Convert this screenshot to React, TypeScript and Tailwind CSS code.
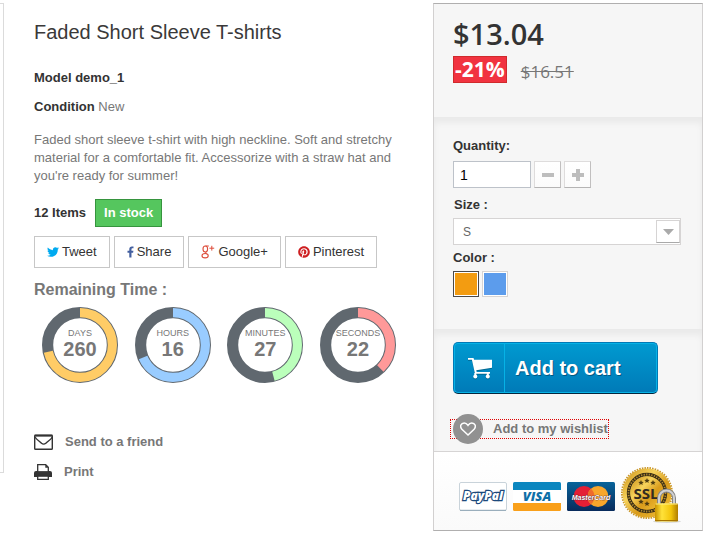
import { useState } from 'react';
import type { ReactNode } from 'react';
import { FaFacebookF, FaPinterest, FaTwitter } from 'react-icons/fa';

interface RingProps {
  label: string;
  value: number;
  percent: number;
  color: string;
}

const rings: RingProps[] = [
  { label: 'DAYS', value: 260, percent: 71.6, color: '#ffcc66' },
  { label: 'HOURS', value: 16, percent: 68.7, color: '#99ccff' },
  { label: 'MINUTES', value: 27, percent: 45.8, color: '#bbffbb' },
  { label: 'SECONDS', value: 22, percent: 37.9, color: '#ff9999' },
];

function Ring({ label, value, percent, color }: RingProps) {
  return (
    <div className="relative size-[76px]">
      <svg viewBox="1 1 76 76" className="size-full">
        <circle cx="39" cy="39" r="32.4" fill="none" stroke="#60686f" strokeWidth="11.2" />
        <circle
          cx="39"
          cy="39"
          r="32.4"
          fill="none"
          stroke={color}
          strokeWidth="9.2"
          pathLength="100"
          strokeDasharray={`${percent} 100`}
          transform="rotate(-90 39 39)"
        />
      </svg>
      <div className="absolute inset-0 flex flex-col items-center pt-[21px]">
        <span className="text-[9px] leading-[11px]">{label}</span>
        <b className="text-xl leading-5">{value}</b>
      </div>
    </div>
  );
}

function GooglePlusIcon() {
  return (
    <svg viewBox="0 0 14 14" className="size-[14px]" fill="none" stroke="#dd4b39">
      <ellipse cx="4.3" cy="4" rx="2.3" ry="3" strokeWidth="1.1" />
      <path d="M4.5 1h3.3M5.8 6.6c-1.7.8-1.5 1.5-.2 2.2" strokeWidth="1" />
      <ellipse cx="4.1" cy="10.7" rx="3.1" ry="2.2" strokeWidth="1.1" />
      <path d="M8.4 3.2h4.8M10.8.8v4.8" strokeWidth="1" />
    </svg>
  );
}

function EnvelopeIcon() {
  return (
    <svg viewBox="0 0 20 16" className="h-4 w-5" fill="none" stroke="#333">
      <rect x=".7" y="1.500" width="17.600" height="13.800" rx=".8" strokeWidth="1.400" />
      <path d="M.5 1.500h18" strokeWidth="2" />
      <path d="M1.200 3.200c.5 2 5 4.500 6.300 6 1.300 1.100 3 1.100 4.300 0 1.300-1.500 5.900-4 6.400-6" strokeWidth="1.400" />
    </svg>
  );
}

function PrinterIcon() {
  return (
    <svg viewBox="0 0 18 16" className="h-4 w-[18px]">
      <path d="M2 7h14q2 0 2 2v4H0V9q0-2 2-2z" fill="#333" />
      <path d="M3.700 8.200V.7h8L14.300 3.300v4.900z" fill="#fff" stroke="#333" strokeWidth="1.3" />
      <path d="M11.300.7v3h3z" fill="#333" />
      <path d="M3 8h12" stroke="#333" strokeWidth="1.5" />
      <path d="M3.700 12.200h10.600v3.100H3.700z" fill="#fff" stroke="#333" strokeWidth="1.3" />
    </svg>
  );
}

function CartIcon() {
  return (
    <svg viewBox="0 0 24 22" className="h-[22px] w-6 drop-shadow-[0_1px_0_#01678f]" fill="#fff">
      <path d="M0 1h5.500l.6 1.800H24v8L8.300 13.300l.4 1.700H22v1.800H7L3.900 2.700H0z" />
      <circle cx="7.300" cy="19.500" r="2" />
      <circle cx="19.800" cy="19.500" r="2" />
      <path d="M6.300 16h2v3h-2zM18.800 16h2v3h-2z" />
    </svg>
  );
}

function PayPalLogo() {
  return (
    <svg viewBox="0 0 48 29" className="h-[29px] w-12">
      <rect x=".5" y=".5" width="47" height="28" rx="1.500" fill="#fff" stroke="#c9d3da" />
      <path d="M1 28.300h46" stroke="#8fa5b4" />
      <text
        x="24"
        y="18"
        textAnchor="middle"
        fontFamily="'Open Sans', sans-serif"
        fontSize="12"
        fontWeight="800"
        fontStyle="italic"
        fill="#fff"
        stroke="#1d4a7c"
        strokeWidth="2.400"
        paintOrder="stroke"
      >
        PayPal
      </text>
    </svg>
  );
}

function VisaLogo() {
  return (
    <svg viewBox="0 0 48 29" className="h-[29px] w-12">
      <rect width="48" height="29" rx="1.500" fill="#fff" />
      <path d="M0 8V1.500Q0 0 1.500 0h45Q48 0 48 1.500V8z" fill="#0b86bf" />
      <path d="M0 21h48v6.500q0 1.500-1.500 1.500h-45Q0 29 0 27.500z" fill="#f9a01b" />
      <text
        x="24"
        y="19"
        textAnchor="middle"
        fontFamily="'Open Sans', sans-serif"
        fontSize="13"
        fontWeight="800"
        fontStyle="italic"
        fill="#0f6fa8"
      >
        VISA
      </text>
    </svg>
  );
}

function MasterCardLogo() {
  return (
    <svg viewBox="0 0 48 29" className="h-[29px] w-12">
      <defs>
        <linearGradient id="mc" x1="0" y1="0" x2="0" y2="1">
          <stop offset="0" stopColor="#07639a" />
          <stop offset="1" stopColor="#082b5c" />
        </linearGradient>
      </defs>
      <rect width="48" height="29" rx="1.500" fill="url(#mc)" />
      <circle cx="17" cy="14.500" r="10.500" fill="#e41f35" />
      <circle cx="31" cy="14.500" r="10.500" fill="#f8a62b" />
      <path d="M24 6.700a10.500 10.500 0 0 1 0 15.600 10.500 10.500 0 0 1 0-15.600" fill="#ee6a2c" />
      <text
        x="24"
        y="17.500"
        textAnchor="middle"
        fontSize="7"
        fontWeight="bold"
        fontStyle="italic"
        fill="#fff"
        stroke="#4a1830"
        strokeWidth=".6"
        paintOrder="stroke"
      >
        MasterCard
      </text>
    </svg>
  );
}

function SslBadge() {
  return (
    <svg viewBox="0 0 60 58" className="h-[58px] w-[60px]">
      <defs>
        <linearGradient id="gold" x1="0" y1="0" x2="1" y2="1">
          <stop offset="0" stopColor="#c98d12" />
          <stop offset=".35" stopColor="#f7d35c" />
          <stop offset=".6" stopColor="#d99b1b" />
          <stop offset="1" stopColor="#f3c43c" />
        </linearGradient>
        <linearGradient id="lock" x1="0" y1="0" x2="1" y2="0">
          <stop offset="0" stopColor="#c99300" />
          <stop offset=".3" stopColor="#ffe23a" />
          <stop offset=".7" stopColor="#f2c40a" />
          <stop offset="1" stopColor="#b07d00" />
        </linearGradient>
      </defs>
      <circle cx="26" cy="26" r="25" fill="none" stroke="#c8962a" strokeWidth="2" strokeDasharray="1.500 1.100" />
      <circle cx="26" cy="26" r="24.500" fill="url(#gold)" />
      <circle cx="26" cy="26" r="18.500" fill="none" stroke="#3b2f16" strokeWidth="3.400" />
      <circle cx="26" cy="26" r="18.500" fill="none" stroke="#b99133" strokeWidth="1.800" strokeDasharray="1.200 1.400" />
      <circle cx="26" cy="26" r="16.500" fill="url(#gold)" />
      <g fill="#4d3b12">
        <path id="star" d="m26 11 .8 1.700 1.900.2-1.400 1.300.4 1.900-1.700-1-1.700 1 .4-1.900-1.400-1.300 1.900-.2z" />
        <use href="#star" x="-6" y="2" />
        <use href="#star" x="6" y="2" />
        <use href="#star" x="-6" y="21" />
        <use href="#star" y="23" />
      </g>
      <text
        x="25"
        y="32"
        textAnchor="middle"
        fontFamily="'Open Sans', sans-serif"
        fontSize="15"
        fontWeight="bold"
        fill="#332b20"
      >
        SSL
      </text>
      <ellipse cx="46" cy="54.500" rx="14" ry="1.500" fill="#d8d8d8" />
      <path d="M38 38v-7a7.500 7.500 0 0 1 15 0v7" fill="none" stroke="#858585" strokeWidth="4" />
      <path d="M38 38v-7a7.500 7.500 0 0 1 15 0v7" fill="none" stroke="#d0d0d0" strokeWidth="2" />
      <rect x="34" y="36.500" width="23" height="18" rx="1" fill="url(#lock)" />
      <path d="M34.500 37h22" stroke="#fff08a" />
      <path d="M34 53.500h23" stroke="#a87500" />
    </svg>
  );
}

function ShareButton({ icon, children }: { icon: ReactNode; children: ReactNode }) {
  return (
    <button
      type="button"
      className="flex h-8 items-center gap-[3px] border border-[#c7c7c7] bg-white px-3 text-[13px] text-[#333]"
    >
      {icon}
      {children}
    </button>
  );
}

export default function App() {
  const [quantity, setQuantity] = useState('1');
  const [color, setColor] = useState('orange');

  const changeQuantity = (delta: number) => {
    setQuantity((q) => String(Math.max(1, (Number(q) || 1) + delta)));
  };

  return (
    <main className="flex items-start bg-white pt-[3px] pr-px font-['Liberation_Sans',Arial,sans-serif] text-[13px] leading-[18px] text-[#777]">
      <div className="h-[470px] w-1 shrink-0 border-y border-r border-[#dbdbdb]" />

      <section className="min-w-0 flex-1 pt-4 pr-8 pl-[30px]">
        <h1 className="text-xl leading-[26px] text-[#3a3939]">Faded Short Sleeve T-shirts</h1>
        <p className="mt-6">
          <b className="text-[#333]">Model demo_1</b>
        </p>
        <p className="mt-[11px]">
          <b className="text-[#333]">Condition</b> New
        </p>
        <p className="mt-[15px]">
          Faded short sleeve t-shirt with high neckline. Soft and stretchy material for a comfortable fit.
          Accessorize with a straw hat and you're ready for summer!
        </p>

        <div className="mt-[14px] flex items-center gap-[9px] font-bold text-[#333]">
          <span>12 Items</span>
          <span className="border border-[#36943e] bg-[#55c65e] px-2 py-1 text-white">In stock</span>
        </div>

        <div className="mt-[9px] flex gap-1">
          <ShareButton icon={<FaTwitter className="size-3 text-[#00aaf0]" />}>Tweet</ShareButton>
          <ShareButton icon={<FaFacebookF className="h-3 w-[7px] text-[#435f9f]" />}>Share</ShareButton>
          <ShareButton icon={<GooglePlusIcon />}>Google+</ShareButton>
          <ShareButton icon={<FaPinterest className="size-3 text-[#ce1f21]" />}>Pinterest</ShareButton>
        </div>

        <h2 className="mt-3 text-base leading-5 font-bold">Remaining Time :</h2>
        <div className="mt-[7px] ml-2 flex max-w-[354px] justify-between">
          {rings.map((ring) => (
            <Ring key={ring.label} {...ring} />
          ))}
        </div>

        <ul className="mt-[50px] space-y-3 font-bold">
          <li>
            <a href="#send" className="flex items-center gap-[11px]">
              <EnvelopeIcon />
              Send to a friend
            </a>
          </li>
          <li>
            <a href="#print" className="flex items-center gap-3">
              <PrinterIcon />
              Print
            </a>
          </li>
        </ul>
      </section>

      <form
        className="w-[270px] shrink-0 border border-[#d2d0d0] border-t-[#b0afaf] border-b-[#b0afaf] bg-[#f6f6f6]"
        onSubmit={(e) => e.preventDefault()}
      >
        <div className="px-[19px] pt-3 pb-[34px] font-['Open_Sans',sans-serif]">
          <p className="text-[29px] leading-9 font-semibold text-[#333]">$13.04</p>
          <div className="mt-1 flex items-center gap-[14px]">
            <span className="border border-[#d02a2c] bg-[#f13340] px-px text-[21px] leading-[25px] font-bold text-white">
              -21%
            </span>
            <del className="pt-1 text-[17px] leading-[22px]">$16.51</del>
          </div>
        </div>

        <div className="px-[19px] pt-5 pb-8 shadow-[inset_0_6px_6px_rgba(0,0,0,0.05)]">
          <label htmlFor="quantity" className="block font-bold text-[#333]">
            Quantity:
          </label>
          <div className="mt-[6px] flex gap-[3px]">
            <input
              id="quantity"
              type="text"
              value={quantity}
              onChange={(e) => setQuantity(e.target.value)}
              className="h-[27px] w-[78px] border border-[#bdc2c9] bg-white px-[6px] text-sm text-black"
            />
            <button
              type="button"
              aria-label="Decrease quantity"
              onClick={() => changeQuantity(-1)}
              className="flex size-[27px] items-center justify-center border border-[#dedcdc] border-r-[#c1bfbf] border-b-[#b5b4b4] bg-gradient-to-b from-white to-[#fbfbfb]"
            >
              <svg viewBox="0 0 12 12" className="size-3">
                <path d="M0 6h12" stroke="#bdbdbd" strokeWidth="4" />
              </svg>
            </button>
            <button
              type="button"
              aria-label="Increase quantity"
              onClick={() => changeQuantity(1)}
              className="flex size-[27px] items-center justify-center border border-[#dedcdc] border-r-[#c1bfbf] border-b-[#b5b4b4] bg-gradient-to-b from-white to-[#fbfbfb]"
            >
              <svg viewBox="0 0 12 12" className="size-3">
                <path d="M0 6h12M6 0v12" stroke="#bdbdbd" strokeWidth="4" />
              </svg>
            </button>
          </div>

          <label htmlFor="size" className="mt-2 block pl-px font-bold text-[#333]">
            Size :
          </label>
          <div className="relative mt-1 w-[228px]">
            <select
              id="size"
              className="block h-[27px] w-full appearance-none border border-[#d6d4d4] bg-white pl-[9px] text-xs text-[#666]"
            >
              <option>S</option>
              <option>M</option>
              <option>L</option>
            </select>
            <span className="pointer-events-none absolute top-[2px] right-px flex h-[23px] w-6 items-center justify-center border border-[#d6d4d4] border-b-[#a9a9a9] bg-white">
              <svg viewBox="0 0 11 6" className="h-[6px] w-[11px]">
                <path d="M0 0h11L5.500 6z" fill="#aaa" />
              </svg>
            </span>
          </div>

          <fieldset>
            <legend className="pt-1 font-bold text-[#333]">Color :</legend>
            <div className="mt-1 flex gap-[3px]">
              <input
                type="radio"
                name="color"
                aria-label="Orange"
                checked={color === 'orange'}
                onChange={() => setColor('orange')}
                className="size-[26px] appearance-none border border-[#d6d4d4] bg-[#f39c11] shadow-[inset_0_0_0_1px_#fff] checked:border-[#4b4a4a]"
              />
              <input
                type="radio"
                name="color"
                aria-label="Blue"
                checked={color === 'blue'}
                onChange={() => setColor('blue')}
                className="size-[26px] appearance-none border border-[#d6d4d4] bg-[#5c9cec] shadow-[inset_0_0_0_1px_#fff] checked:border-[#4b4a4a]"
              />
            </div>
          </fieldset>
        </div>

        <div className="px-[19px] pt-[13px] pb-3 shadow-[inset_0_6px_6px_rgba(0,0,0,0.05)]">
          <button
            type="submit"
            className="flex h-[52px] w-[205px] items-stretch rounded-[5px] border border-[#0079b6] border-b-[#012740] bg-gradient-to-b from-[#009ad0] to-[#007ab7] text-xl font-bold text-white shadow-[inset_0_0_0_1px_#06b2e6] [text-shadow:1px_1px_#015883]"
          >
            <span className="flex w-[51px] items-center justify-center border-r border-[#06b2e6] pl-px">
              <CartIcon />
            </span>
            <span className="self-center pl-[10px]">Add to cart</span>
          </button>

          <a
            href="#wishlist"
            className="mt-[25px] -ml-[3px] flex h-5 w-[159px] items-center gap-[10px] border border-dotted border-[#e00000] pl-[2px] font-bold whitespace-nowrap"
          >
            <span className="flex size-[30px] shrink-0 items-center justify-center rounded-full bg-[#919191]">
              <svg viewBox="0 0 16 14" className="h-[14px] w-4" fill="none" stroke="#fff" strokeWidth="1.500">
                <path d="M8 13 1.900 7.200C-.6 4.300 1 .9 4.200.9 6 .9 7.300 2.200 8 3.300 8.700 2.200 10 .9 11.800.9c3.200 0 4.800 3.400 2.300 6.300z" />
              </svg>
            </span>
            Add to my wishlist
          </a>
        </div>

        <div className="flex items-center gap-[6px] border-t border-[#d6d4d4] bg-gradient-to-b from-white to-[#fafafa] pt-[15px] pb-[5px] pl-[25px]">
          <PayPalLogo />
          <VisaLogo />
          <MasterCardLogo />
          <SslBadge />
        </div>
      </form>
    </main>
  );
}
